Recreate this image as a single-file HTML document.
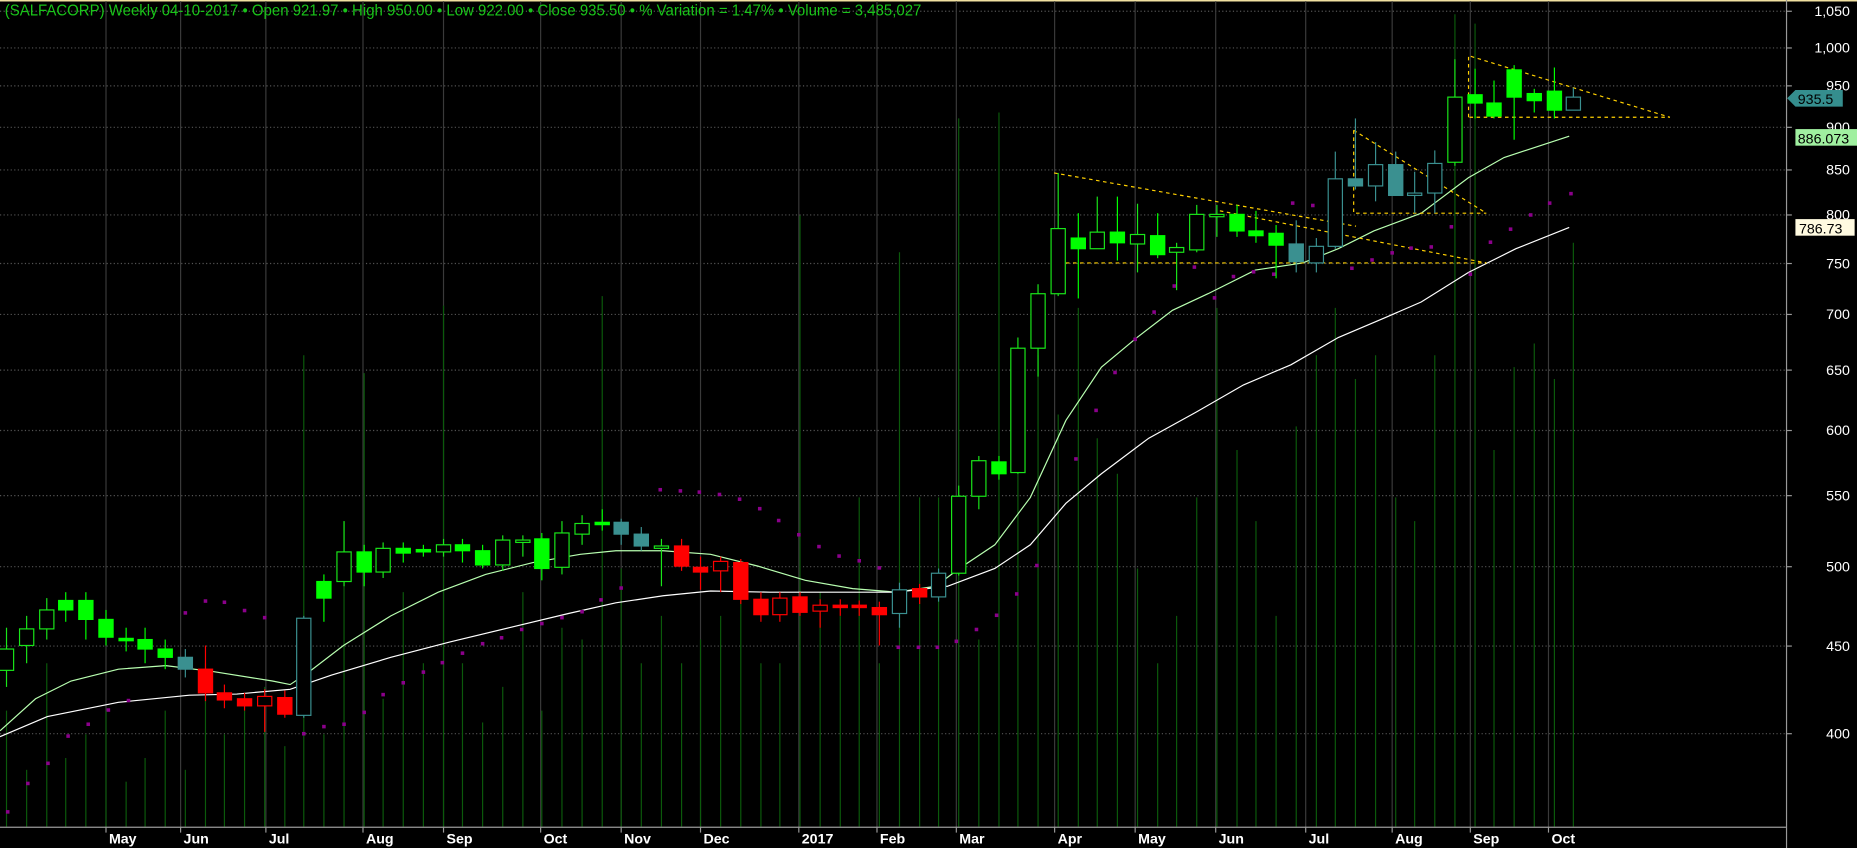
<!DOCTYPE html>
<html><head><meta charset="utf-8"><style>
html,body{margin:0;padding:0;background:#000;overflow:hidden}
svg{display:block}
text{font-family:"Liberation Sans",sans-serif}
</style></head><body>
<svg id="c" width="1857" height="848" viewBox="0 0 1568 716" preserveAspectRatio="none" xmlns="http://www.w3.org/2000/svg">
<rect width="1568" height="716" fill="#000"/>
<line x1="0" y1="0.5" x2="1568" y2="0.5" stroke="#f0e0a0" stroke-width="1.5"/>
<g id="grid"></g>
<g id="vol"></g>
<g id="ma">
<polyline fill="none" stroke="#b8ffb0" stroke-width="1" points="0,617 30,590 60,575 100,565 140,562 180,567 230,575 245,578 260,568 290,545 330,520 370,500 410,485 450,475 490,468 520,465 560,465 600,468 640,478 680,490 720,497 757,500 790,495 810,480 840,460 870,420 900,355 930,310 960,285 990,262 1020,248 1060,228 1100,222 1130,210 1160,195 1200,180 1240,150 1270,133 1325,115"/>
<polyline fill="none" stroke="#ffffff" stroke-width="1" points="0,622 40,605 100,593 160,587 200,586 245,582 280,570 330,555 380,542 430,530 480,518 520,509 560,503 600,499 650,500 700,500 757,500 800,495 840,480 870,460 900,425 930,400 970,370 1010,348 1050,325 1090,308 1130,285 1170,268 1200,255 1240,230 1280,210 1325,192"/>
</g>
<g fill="none" stroke="#ffd000" stroke-width="1" stroke-dasharray="3,3">
<line x1="890" y1="146" x2="1145" y2="191"/>
<line x1="1030" y1="178" x2="1255" y2="222"/>
<line x1="900" y1="222" x2="1255" y2="222"/>
<polyline points="1143,110 1143,180 1255,180"/>
<line x1="1143" y1="110" x2="1255" y2="180"/>
<polyline points="1240,99 1240,47 1410,99 1240,99"/>
</g>
<g id="sar" fill="#8b008b"></g>
<g id="cand"></g>
<line x1="1508.5" y1="0" x2="1508.5" y2="716" stroke="#999"/>
<line x1="0" y1="698.5" x2="1508" y2="698.5" stroke="#999"/>
<g id="axis" fill="#fff" font-size="12"></g>
<g id="months" fill="#fff" font-size="12" font-weight="bold"></g>
<text x="4" y="13" fill="#19c419" font-size="13" textLength="774" lengthAdjust="spacingAndGlyphs">(SALFACORP) Weekly  04-10-2017  •  Open 921.97  •  High 950.00  •  Low 922.00  •  Close 935.50  •  % Variation = 1.47%  •  Volume = 3,485,027</text>
<polygon points="1509,83 1516,76 1556,76 1556,90 1516,90" fill="#358e8e"/>
<text x="1518" y="88" fill="#000" font-size="12">935.5</text>
<rect x="1516" y="109" width="52" height="14" fill="#a0f0a0"/>
<text x="1518" y="121" fill="#000" font-size="12">886.073</text>
<rect x="1516" y="185" width="50" height="14" fill="#fffae0"/>
<text x="1519" y="197" fill="#000" font-size="12">786.73</text>
</svg>
<script>
const NS="http://www.w3.org/2000/svg";
function el(p,t,a){const e=document.createElementNS(NS,t);for(const k in a)e.setAttribute(k,a[k]);p.appendChild(e);return e;}
const Y=p=>40+632*Math.log(1000/p);
const grid=document.getElementById('grid');
[1050,1000,950,900,850,800,750,700,650,600,550,500,450,400].forEach(p=>{const y=Math.round(Y(p))+.5;
el(grid,'line',{x1:0,x2:1508,y1:y,y2:y,stroke:'#555','stroke-dasharray':'1,2'});
el(grid,'line',{x1:1508,x2:1513,y1:y,y2:y,stroke:'#999'});
const t=el(document.getElementById('axis'),'text',{x:1562,y:y+4,'text-anchor':'end'});t.textContent=p>=1000?(p/1000|0)+','+String(p%1000).padStart(3,'0'):p;});
const months=[[92,'May'],[155,'Jun'],[227,'Jul'],[309,'Aug'],[377,'Sep'],[459,'Oct'],[527,'Nov'],[594,'Dec'],[677,'2017'],[743,'Feb'],[810,'Mar'],[893,'Apr'],[961,'May'],[1029,'Jun'],[1105,'Jul'],[1178,'Aug'],[1244,'Sep'],[1310,'Oct']];
months.forEach(([x,l])=>{const gx=x-3+.5;el(grid,'line',{x1:gx,x2:gx,y1:1,y2:698,stroke:'#3a3a3a'});
el(grid,'line',{x1:gx,x2:gx,y1:698,y2:703,stroke:'#999'});
const t=el(document.getElementById('months'),'text',{x:x,y:712});t.textContent=l;});
const C=[[548,566,530,580,'h'],[531,545,520,560,'h'],[515,531,505,540,'h'],[507,515,500,525,'g'],[507,523,500,540,'g'],[523,538,515,545,'g'],[539,541,530,550,'g'],[540,548,530,560,'g'],[548,555,540,565,'g'],[555,565,548,572,'t'],[565,585,545,592,'r'],[585,591,578,598,'r'],[590,596,585,600,'r'],[588,596,582,618,'rh'],[589,603,583,606,'r'],[522,604,520,606,'th'],[491,505,485,525,'g'],[466,491,440,495,'h'],[466,483,460,495,'g'],[463,483,458,488,'h'],[463,467,458,475,'g'],[464,466,460,470,'g'],[460,466,455,470,'h'],[460,465,455,475,'g'],[465,477,460,480,'g'],[456,477,452,482,'h'],[456,458,452,470,'h'],[455,480,450,490,'g'],[450,479,440,485,'h'],[442,451,435,460,'h'],[441,443,430,448,'g'],[441,451,438,460,'t'],[451,461,445,465,'t'],[461,463,455,495,'h'],[461,478,455,482,'r'],[479,483,470,498,'r'],[474,482,470,500,'rh'],[475,506,472,510,'r'],[506,519,500,525,'r'],[505,519,500,525,'rh'],[504,517,500,520,'r'],[511,516,506,530,'rh'],[511,513,506,520,'r'],[511,513,507,520,'r'],[513,519,508,545,'r'],[498,518,492,530,'th'],[497,504,493,510,'r'],[484,504,480,508,'th'],[419,484,410,486,'h'],[389,419,385,430,'h'],[390,400,385,405,'g'],[294,399,285,400,'h'],[248,294,240,318,'h'],[193,248,146,250,'h'],[201,210,180,252,'g'],[196,210,166,210,'h'],[196,205,166,220,'g'],[198,206,172,230,'h'],[199,215,180,218,'g'],[209,213,205,245,'h'],[181,211,173,213,'h'],[181,183,173,200,'h'],[181,195,173,200,'g'],[195,199,178,205,'g'],[197,207,190,235,'g'],[206,221,186,230,'t'],[208,222,201,230,'th'],[151,208,128,210,'th'],[151,157,100,160,'t'],[139,157,120,170,'th'],[139,165,128,165,'t'],[163,165,145,180,'th'],[138,163,127,180,'th'],[82,137,50,140,'h'],[80,87,58,100,'g'],[87,98,68,100,'g'],[59,82,55,118,'g'],[79,85,75,95,'g'],[77,93,57,100,'g'],[82,93,74,93,'th']];
const cand=document.getElementById('cand'),vol=document.getElementById('vol'),sar=document.getElementById('sar');
const V=[600,650,560,640,620,600,660,640,600,650,560,620,600,580,630,300,620,440,315,590,500,560,258,560,610,580,500,600,530,540,250,480,560,520,560,540,520,500,560,560,182,500,520,420,560,213,420,420,100,540,95,380,300,350,260,370,400,480,560,520,420,260,380,440,520,360,300,260,320,300,420,440,300,12,20,380,310,290,320,205];
const col={h:['none','#19e619'],g:['#00ff00','#00ff00'],r:['#ff0000','#ff0000'],rh:['none','#ff0000'],t:['#3a9090','#3a9090'],th:['none','#3a9090']};
C.forEach((c,i)=>{const x=Math.round(5+i*16.75)+.5;
el(vol,'line',{x1:x,x2:x,y1:V[i],y2:698,stroke:'#0b5a0b'});
const [f,s]=col[c[4]];
el(cand,'line',{x1:x,x2:x,y1:c[2],y2:c[3],stroke:s});
el(cand,'rect',{x:x-6,y:c[0],width:12,height:Math.max(1,c[1]-c[0]),fill:f==='none'?'#000':f,stroke:s});
});
const S=[[5,684],[22,660],[39,643],[56,620],[73,610],[90,598],[107,590],[155,516],[172,506],[188,507],[205,514],[222,520],[239,600],[255,618],[272,612],[289,610],[306,600],[322,585],[339,575],[356,566],[372,558],[389,550],[406,542],[422,537],[439,530],[456,525],[473,520],[490,515],[506,505],[523,495],[556,412],[573,413],[589,414],[606,416],[623,420],[640,428],[656,438],[673,450],[690,460],[707,468],[724,472],[741,478],[757,545],[774,545],[790,545],[806,540],[823,530],[840,518],[857,500],[874,476],[907,386],[924,345],[940,313],[957,285],[973,262],[990,240],[1007,224],[1024,250],[1040,232],[1057,228],[1074,230],[1090,170],[1107,172],[1124,178],[1140,225],[1157,218],[1174,212],[1190,208],[1207,207],[1224,190],[1240,230],[1257,203],[1274,192],[1291,180],[1307,170],[1325,162]];
S.forEach(([x,y])=>el(sar,'rect',{x:x,y:y,width:3,height:3}));
</script>
</body></html>
